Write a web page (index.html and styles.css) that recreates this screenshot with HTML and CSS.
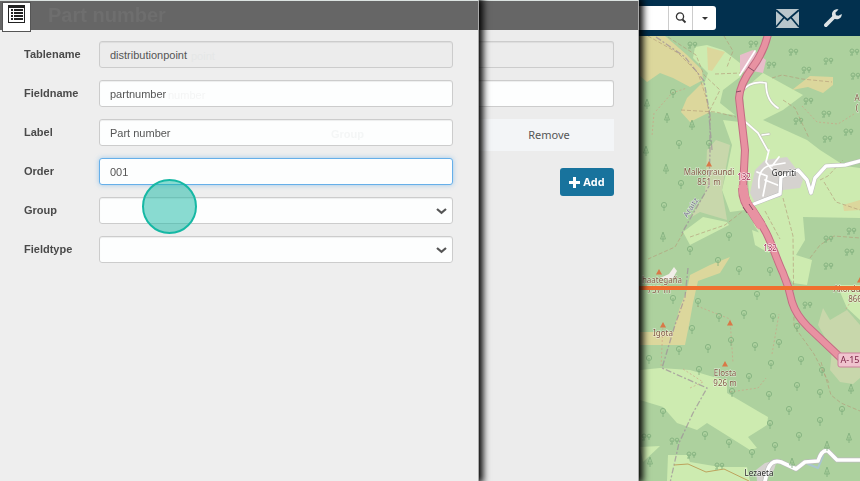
FILE: index.html
```html
<!DOCTYPE html>
<html lang="en">
<head>
<meta charset="utf-8">
<title>Part number</title>
<link rel="stylesheet" href="styles.css">
</head>
<body>
<div class="app">
  <section class="panel panel-front">
    <header class="panel-header">
      <button class="menu-button" type="button" aria-label="Menu">
        <svg width="17" height="18" viewBox="0 0 17 18"><path fill="#222" d="M0 0h17v18H0z"/><path fill="#fff" d="M1 3h15v14H1z"/><path fill="#222" d="M3 4h2v2H3zM6 4h9v2H6zM3 7h2v2H3zM6 7h9v2H6zM3 10h2v2H3zM6 10h9v2H6zM3 13h2v2H3zM6 13h9v2H6z"/></svg>
      </button>
      <h1 class="panel-title">Part number</h1>
    </header>
    <form class="fields">
      <label for="tablename">Tablename</label>
      <div class="control"><input id="tablename" class="field readonly" value="distributionpoint" readonly><span class="echo echo-end" aria-hidden="true">point</span></div>
      <label for="fieldname">Fieldname</label>
      <div class="control"><input id="fieldname" class="field" value="partnumber"><span class="echo echo-mid" aria-hidden="true">number</span></div>
      <label for="label">Label</label>
      <div class="control"><input id="label" class="field" value="Part number"><span class="echo echo-head" aria-hidden="true">Group</span></div>
      <label for="order">Order</label>
      <div class="control"><input id="order" class="field active" value="001"></div>
      <label for="group">Group</label>
      <div class="control"><select id="group" class="field"><option></option></select><svg class="chevron" width="11" height="7" viewBox="0 0 11 7"><path d="M1 1l4.500 3.800L10 1" fill="none" stroke="#555" stroke-width="2.200"/></svg><span class="pointer"></span></div>
      <label for="fieldtype">Fieldtype</label>
      <div class="control"><select id="fieldtype" class="field"><option></option></select><svg class="chevron" width="11" height="7" viewBox="0 0 11 7"><path d="M1 1l4.500 3.800L10 1" fill="none" stroke="#555" stroke-width="2.200"/></svg></div>
    </form>
  </section>

  <section class="panel panel-back">
    <header class="panel-header"></header>
    <div class="back-body">
      <input class="field clipped readonly" aria-label="Tablename" readonly>
      <input class="field clipped" aria-label="Name">
      <table class="groups"><tr><th>Remove</th></tr></table>
      <button class="add-button" type="button"><svg width="11" height="11" viewBox="0 0 11 11"><path fill="#fff" d="M4 0h3v4h4v3H7v4H4V7H0V4h4z"/></svg>Add</button>
    </div>
  </section>

  <main class="workspace">
    <nav class="toolbar">
      <div class="search">
        <input class="search-input" aria-label="Search">
        <button class="search-button" type="button" aria-label="Search"><svg width="12" height="12" viewBox="0 0 12 12" fill="none" stroke="#333"><circle cx="5" cy="4.500" r="3.600" stroke-width="1.300"/><path d="M7.500 7.500L10.500 10.500" stroke-width="1.800"/></svg></button>
        <button class="search-button" type="button" aria-label="Search options"><svg width="6" height="3" viewBox="0 0 6 3"><path d="M0 0h6L3 3z" fill="#333"/></svg></button>
      </div>
      <button class="tool" type="button" aria-label="Messages"><svg width="23" height="19" viewBox="0 0 23 19"><path fill="#b9c6cc" d="M0 0h23v19H0z"/><path fill="none" stroke="#02304e" stroke-width="1.700" d="M0 1l11.500 10L23 1M0 18l8-9.500M23 18l-8-9.500"/></svg></button>
      <button class="tool" type="button" aria-label="Settings"><svg width="18" height="18" viewBox="0 0 18 18"><path d="M1.900 16.100L10 8" stroke="#dde3e6" stroke-width="3.700" stroke-linecap="round"/><path fill="#dde3e6" d="M14.500.4C11-.5 7.700 2 8 6c.3 3 3.500 5 6.500 4 2-.7 3.300-2.500 3.300-5l-3.300 1.800-2.500-.6-.6-2.500z"/></svg></button>
    </nav>
    <svg class="map" viewBox="639 36 221 445" preserveAspectRatio="xMinYMin slice" role="img" aria-label="Map">
      <defs>
        <g id="r" fill="none" stroke="#7fae7c"><circle r="2.600"/><path d="M0 0v6"/></g>
        <g id="c" fill="none" stroke="#7fae7c"><path d="M0-4L-2.500 3h5zM0 0v6"/></g>
        <g id="m" fill="none" stroke="#7fae7c"><circle cx="-2" r="2"/><circle cx="3" r="1.800"/><path d="M-2 0v4M3 0v4M-4 4h3"/></g>
        <path id="p" fill="#d97847" d="M0-3l3 5.500h-6z"/>
      </defs>
      <path fill="#add19e" d="M639 36h221v445H639z"/>
      <g fill="#cdebb0">
        <path d="M695 47l12-2 16 5 17 13v14l-17 13-3 13 15 12-25-3-7-25 5-14-15-15zM743 90l20-17 40 22-20 15-20 10 44 20 13 10 25 16 15 2v50l-57-1 2 23-9 15 16 5-5 25-14-2-22-32-17-26-5-30zM723 120l17 2 5 88-15 2-8-22 6-25 4-20zM683 232l20-15 24 5 2 3-39 20zM752 230l11 4 6 19-14-8zM837 285h23v35l-13-12zM640 370l20-2 30 2 20 6 17 4v13l41 24-1 8-19 12 9 11-7 2-27-17-16-10-10 7-20-7-14-16-23-7zM668 455h19l3 7 30 5h27l3 14h-83zM640 447l20-1-17 16zM773 260h37l-3 20-14-2z"/>
      </g>
      <path fill="#c8d7ab" d="M707 150l9-10 14 5-8 45 5 30-17-5-10-3-10 6 15-24zM823 308l7 12 17-10 13 15v53l-7 6-13-2-10-12 2-20-14-25z"/>
      <path fill="#dcd79c" d="M640 36h25l22 19 15 15 1 10-13 7-17-9-13-5-13 9-7-6zM703 82l7 30-20 10-9-10 6-14zM707 47l18 5-13 19-4-1zM792 90l18-14 23 1v8l-10 8-15-6zM730 257l-10 16-22 8-5 22-3 17-5 25h-45v-13h33l7-25 7-17 3-15 20-10zM843 205l17-5v10l-16 1z"/>
      <path fill="#e7bdca" d="M740 55l13-5 13 10-3 13-16-3-7 4z"/>
      <path fill="#d5d2cf" d="M765 160l22-3 10 13 6 10-3 8-17 2-3 7-25 6-5-10 5-23zM756 470l9-7 12-3-3 10-10 11h-7z"/>

      <g fill="none" stroke="#b39b79" stroke-width="1" stroke-dasharray="4 2" opacity=".65">
        <path d="M648 36l30 17 20 20 8 24 5 25M668 37l28 18 8 20 16 15-12 24M681 110l35 2 20 5M772 78l10-3 20 4 30 3M783 100l12 8 14 30M783 198l10 38 1 90 20 28 15 29M690 237l35-12 18-14M683 233l-8 14-27 12M724 36l9 15-6 16M715 74l26-1M765 211l15 28M820 180l8-4 15-16M824 182l12 20 24 8M810 258l10-13 14-9 26 2M821 362l10 33 10 8 19 8"/>
      </g>
      <g fill="none" stroke="#9c8d99" stroke-width="1.300" stroke-dasharray="6 2 2 2" opacity=".7">
        <path d="M656 37l29 20 19 24 6 34v37l-1 34-15 26-12 21M688 268l-3 29-10 28-13 43 45 20-14 25-14 30-9 40M712 150l-3-34"/>
      </g>
      <g fill="none" stroke="#ce9b82" stroke-width="1" stroke-dasharray="2 2" opacity=".6"><path d="M663 324l-2 44M697 306l33 13 3 44M802 106l15 16 21 2 16-10M690 388l13-6-20-13M730 392l28-4 8-10M772 354l7-40M656 111l16-18 15-5M846 309l14-22M654 113l-2 23"/></g>
      <path fill="none" stroke="#bda35d" d="M674 465l14-1 18 8 18-3 25 12"/>
      <g fill="none" stroke="#fff" stroke-linecap="round" stroke-linejoin="round">
        <path stroke="#c4cbb7" stroke-width="3" d="M741 93q8-13 25-10 0 18 12 25M741 118l17 15 10 18M762 135l7-1"/>
        <path stroke-width="1.700" d="M741 93q8-13 25-10 0 18 12 25M741 118l17 15 10 18M762 135l7-1M740 75l15-24M769 150l-3 12 8 10M759 188q-2-22 14-23l12-2M757 172l10 4-4 20M765 180l15 6M779 157l-7 9"/>
        <path stroke="#bbb" stroke-width="4.500" d="M754 204l26-10 1-17 17-7 9 10 4 13 4-15 11-12 19-1 15-4"/>
        <path stroke-width="3.400" d="M754 204l26-10 1-17 17-7 9 10 4 13 4-15 11-12 19-1 15-4"/>
        <path stroke="#a9c6d0" stroke-width="2" d="M808 464l10 4 5-12"/>
        <path stroke="#bbb" stroke-width="5" d="M765 481l3-12q4-10 13-7l15 7 9-7 13-1q4-12 10-10l9 9h23"/>
        <path stroke-width="3.700" d="M765 481l3-12q4-10 13-7l15 7 9-7 13-1q4-12 10-10l9 9h23"/>
      </g>
      <path fill="#f1eee8" d="M660 278l9-4 5-7 3 4-4 7-5 2z"/>
      <g fill="none">
        <path stroke="#c46c83" stroke-width="8" d="M768 34q-4 18-16 34t-13 30l6 52-2 38q1 13 9 23c18 22 20 38 31 62q6 14 9 29 4 13 16 25l36 34"/>
        <path stroke="#e892a2" stroke-width="6" d="M768 34q-4 18-16 34t-13 30l6 52-2 38q1 13 9 23c18 22 20 38 31 62q6 14 9 29 4 13 16 25l36 34"/>
        <path stroke="#c46c83" stroke-width="10" d="M743 188q0 14 9 23l9 14"/><path stroke="#e892a2" stroke-width="9" d="M743 185q0 16 9 26l10 16"/>
        <path stroke="#884f65" d="M743 207l4 6M749 204l4 6M748 67l6 4M736 92l5-1"/>
      </g>
      <g opacity=".8">
        <use href="#m" x="692" y="44"/><use href="#m" x="753" y="43"/><use href="#m" x="793" y="51"/><use href="#m" x="854" y="51"/><use href="#m" x="828" y="60"/><use href="#m" x="806" y="69"/><use href="#m" x="771" y="64"/><use href="#m" x="855" y="75"/><use href="#m" x="808" y="100"/><use href="#m" x="826" y="113"/><use href="#m" x="798" y="120"/><use href="#m" x="848" y="131"/><use href="#m" x="827" y="138"/><use href="#m" x="851" y="230"/><use href="#m" x="828" y="238"/><use href="#m" x="849" y="251"/><use href="#m" x="828" y="265"/><use href="#m" x="807" y="304"/><use href="#m" x="646" y="436"/><use href="#m" x="674" y="440"/><use href="#m" x="691" y="454"/><use href="#m" x="719" y="465"/>
        <use href="#r" x="673" y="92"/><use href="#r" x="679" y="143"/><use href="#r" x="709" y="143"/><use href="#r" x="681" y="183"/><use href="#r" x="664" y="205"/><use href="#r" x="729" y="235"/><use href="#r" x="690" y="249"/><use href="#r" x="718" y="260"/><use href="#r" x="739" y="269"/><use href="#r" x="770" y="270"/><use href="#r" x="757" y="294"/><use href="#r" x="673" y="298"/><use href="#r" x="698" y="301"/><use href="#r" x="719" y="316"/><use href="#r" x="744" y="313"/><use href="#r" x="773" y="316"/><use href="#r" x="797" y="326"/><use href="#r" x="692" y="328"/><use href="#r" x="731" y="340"/><use href="#r" x="708" y="347"/><use href="#r" x="755" y="345"/><use href="#r" x="779" y="342"/><use href="#r" x="679" y="349"/><use href="#r" x="649" y="358"/><use href="#r" x="801" y="359"/><use href="#r" x="771" y="363"/><use href="#r" x="699" y="369"/><use href="#r" x="822" y="370"/><use href="#r" x="749" y="376"/><use href="#r" x="797" y="385"/><use href="#r" x="732" y="391"/><use href="#r" x="769" y="394"/><use href="#r" x="820" y="392"/><use href="#r" x="789" y="409"/><use href="#r" x="842" y="409"/><use href="#r" x="663" y="411"/><use href="#r" x="770" y="423"/><use href="#r" x="820" y="420"/><use href="#r" x="705" y="434"/><use href="#r" x="799" y="435"/><use href="#r" x="729" y="442"/><use href="#r" x="775" y="445"/><use href="#r" x="752" y="452"/>
        <use href="#c" x="667" y="117"/><use href="#c" x="692" y="124"/><use href="#c" x="647" y="103"/><use href="#c" x="666" y="168"/><use href="#c" x="646" y="150"/><use href="#c" x="663" y="236"/><use href="#c" x="851" y="388"/><use href="#c" x="849" y="437"/><use href="#c" x="827" y="445"/><use href="#c" x="792" y="462"/><use href="#c" x="827" y="471"/><use href="#c" x="650" y="461"/>
      </g>
      <use href="#p" x="709" y="164"/><use href="#p" x="659" y="272"/><use href="#p" x="663" y="325"/><use href="#p" x="730" y="323"/><use href="#p" x="725" y="364"/><use href="#p" x="860" y="280"/>
      <g class="place peak">
        <text x="709" y="175">Malkorraundi</text><text x="709" y="185">851 m</text>
        <text x="662" y="283">haategaña</text><text x="659" y="293">737 m</text>
        <text x="663" y="336">Igota</text><text x="725" y="376">Elosta</text><text x="725" y="386">926 m</text>
        <text x="847" y="292">Akordu</text><text x="855" y="302">866</text><text x="857" y="101">A</text><text x="857" y="111">(</text>
      </g>
      <text class="place boundary" transform="translate(693 209) rotate(-57)">Araitz</text>
      <g class="place town"><text x="784" y="176">Gorriti</text><text x="759" y="476">Lezaeta</text></g>
      <g class="place road"><text x="744" y="180">132</text><text x="770" y="251">132</text></g>
      <path fill="#f06f2f" d="M639 286h221v4H639z"/>
      <rect x="838" y="353" width="26" height="14" rx="2" fill="#f0c3ce" stroke="#cb809a"/><text class="place shield" x="850" y="363">A-15</text>
    </svg>
  </main>
</div>
</body>
</html>
```

FILE: styles.css
```css
* { box-sizing: border-box; }

body {
  margin: 0;
  font: 11px/16px "Liberation Sans", Arial, sans-serif;
  color: #4a4a4a;
}

input, select, button { font: inherit; color: inherit; margin: 0; }
svg { display: block; }

.app {
  display: grid;
  grid-template-columns: 479fr 160fr 221fr;
  height: 100vh;
  overflow: hidden;
}

.panel { background: #eee; border-top: 1px solid #dce3e1; border-right: 1px solid #aaa; min-width: 0; }
.panel-front { position: relative; z-index: 3; box-shadow: 2px 0 7px 2px #000; }
.panel-back { position: relative; z-index: 2; box-shadow: 2px 0 7px 2px #000; background: #ececec; }

.panel-header {
  display: flex;
  align-items: flex-start;
  gap: 17px;
  height: 29px;
  padding: 1px 2px;
  background: #666;
}

.menu-button {
  display: grid;
  place-items: start center;
  flex: none;
  width: 29px;
  height: 30px;
  padding: 2px 0;
  border: 1px solid #555;
  background: #fff;
}

.panel-title { margin: 0; font-size: 20px; line-height: 26px; color: #6e6e6e; }

.fields {
  display: grid;
  grid-template-columns: 75px 1fr;
  row-gap: 12px;
  padding: 11px 25px 11px 24px;
}

.fields label { font-weight: bold; line-height: 27px; }
.control { position: relative; }

.field {
  display: block;
  width: 100%;
  height: 27px;
  padding: 0 10px;
  border: 1px solid #ccc;
  border-radius: 3px;
  background: #fdfefe;
  box-shadow: inset 0 1px 1px #0001;
  color: #555;
  outline: none;
  appearance: none;
}

.readonly { background: #ececec; }
.active { border-color: #66afe9; box-shadow: 0 0 5px #66afe999; }
.chevron { position: absolute; right: 6px; top: 11px; pointer-events: none; }

.echo { position: absolute; top: 7px; color: #e5e7e7; pointer-events: none; }
.echo-end { left: 92px; }
.echo-mid { left: 69px; color: #f4f5f5; }
.echo-head { left: 232px; font-weight: bold; color: #f4f6f6; }

.pointer {
  position: absolute;
  left: 43px;
  top: -18px;
  width: 55px;
  height: 55px;
  border: 2px solid #16b8a4;
  border-radius: 50%;
  background: #16b8a480;
}

.back-body { display: flex; flex-direction: column; gap: 12px; padding: 11px 24px 0 0; }
.clipped { border-left: 0; border-radius: 0 3px 3px 0; }

.groups { width: 100%; border-collapse: collapse; background: #f3f5f7; }
.groups th {
  height: 32px;
  padding: 0 5px 0 10px;
  font: 11px/16px "Noto Sans", sans-serif;
  color: #555;
}

.add-button {
  display: flex;
  align-items: center;
  justify-content: center;
  gap: 3px;
  align-self: flex-end;
  width: 54px;
  height: 28px;
  margin-top: 5px;
  padding: 0;
  border: 0;
  border-radius: 3px;
  background: #18739d;
  color: #fff;
  font: bold 11px/16px "Open Sans", sans-serif;
}

.workspace { display: flex; flex-direction: column; min-width: 0; min-height: 0; }

.toolbar {
  display: flex;
  align-items: center;
  flex: none;
  height: 36px;
  padding-right: 18px;
  background: #02304e;
}

.search {
  display: flex;
  width: 77px;
  height: 24px;
  margin-right: auto;
  background: #fff;
  border-radius: 0 3px 3px 0;
}
.search-input { flex: 1; min-width: 0; padding: 0 4px; border: 0; background: none; }
.search-button {
  display: grid;
  place-items: center;
  width: 24px;
  padding: 0;
  border: 0;
  border-left: 1px solid #ccc;
  background: none;
}

.tool { padding: 0; border: 0; margin-left: 25px; background: none; }

.map { flex: 1; width: 100%; min-height: 0; }

.place {
  font-family: "Noto Sans", sans-serif;
  font-size: 8px;
  text-anchor: middle;
  paint-order: stroke;
  stroke: #ffffff99;
  stroke-width: 1px;
}
.peak { fill: #805943; }
.town { fill: #222; }
.boundary { fill: #77738e; }
.road { fill: #a52b54; stroke: #fff; }
.shield { fill: #792344; font-size: 9px; stroke: none; }
```
